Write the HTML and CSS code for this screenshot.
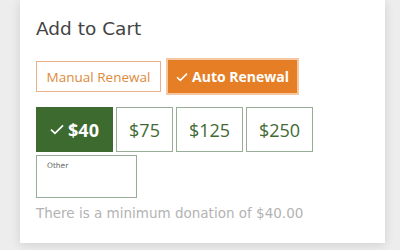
FILE: index.html
```html
<!DOCTYPE html>
<html>
<head>
<meta charset="utf-8">
<link rel="stylesheet" href="styles.css">
</head>
<body>
<div class="card">
  <h2 class="title">Add to Cart</h2>
  <div class="renewal">
    <button class="ren ren-manual">Manual Renewal</button>
    <button class="ren ren-auto"><svg class="chk" viewBox="0 0 12 10" width="12" height="10"><path d="M1 5.2 L4.3 8.4 L11 1.6" fill="none" stroke="#fff" stroke-width="1.5"/></svg>Auto Renewal</button>
  </div>
  <div class="amounts">
    <button class="amt amt-on"><svg class="chk2" viewBox="0 0 14 11" width="14" height="11"><path d="M1 5.6 L5 9.4 L13 1.4" fill="none" stroke="#fff" stroke-width="1.7"/></svg>$40</button>
    <button class="amt w75">$75</button>
    <button class="amt w125">$125</button>
    <button class="amt w125">$250</button>
  </div>
  <div class="other"><span class="other-label">Other</span></div>
  <p class="min">There is a minimum donation of $40.00</p>
</div>
</body>
</html>
```
FILE: styles.css
```css
html, body { margin: 0; padding: 0; }
body {
  width: 400px;
  height: 250px;
  background: #ededed;
  overflow: hidden;
}
.card {
  margin-left: 20px;
  width: 365px;
  height: 243px;
  background: #fff;
  box-shadow: 0 2px 10px rgba(0,0,0,0.12);
  box-sizing: border-box;
  padding: 16px 16px 0 16px;
}
.title {
  margin: 0;
  font-family: "DejaVu Sans", sans-serif;
  font-weight: normal;
  font-size: 18.5px;
  line-height: 26px;
  color: #444;
}
.renewal {
  display: flex;
  align-items: center;
  gap: 7px;
  margin-top: 18px;
}
button {
  font-family: "Open Sans", sans-serif;
  cursor: pointer;
  margin: 0;
  box-sizing: border-box;
  white-space: nowrap;
}
.ren {
  height: 31px;
  padding: 0;
  font-size: 14px;
  display: flex;
  align-items: center;
  justify-content: center;
}
.ren-manual {
  width: 125px;
  font-size: 13.5px;
  background: #fff;
  color: #e08a3c;
  border: 1px solid #eab088;
}
.ren-auto {
  width: 129px;
  height: 33px;
  background: #e57e25;
  color: #fff;
  font-weight: 700;
  border: none;
  box-shadow: 0 0 0 2px #f3c8a2;
}
.chk { margin-right: 4px; }
.amounts {
  display: flex;
  gap: 3px;
  margin-top: 14px;
}
.amt {
  height: 45px;
  background: #fff;
  border: 1px solid #98ad95;
  color: #3f6a33;
  font-size: 18px;
  display: flex;
  align-items: center;
  justify-content: center;
  padding: 0;
}
.amt-on {
  width: 77px;
  background: #3d6b2f;
  border-color: #3d6b2f;
  color: #fff;
  font-weight: 700;
}
.chk2 { margin-right: 4px; }
.w75 { width: 57px; }
.w125 { width: 67px; }
.other {
  margin-top: 3px;
  width: 101px;
  height: 43px;
  box-sizing: border-box;
  border: 1px solid #98ad95;
  padding: 5px 0 0 10px;
}
.other-label {
  display: block;
  font-family: "DejaVu Sans", sans-serif;
  font-size: 7.5px;
  color: #666;
}
.min {
  margin: 6px 0 0 0;
  font-family: "DejaVu Sans", sans-serif;
  font-size: 13.5px;
  line-height: 18px;
  color: #b3b3b3;
}
```
